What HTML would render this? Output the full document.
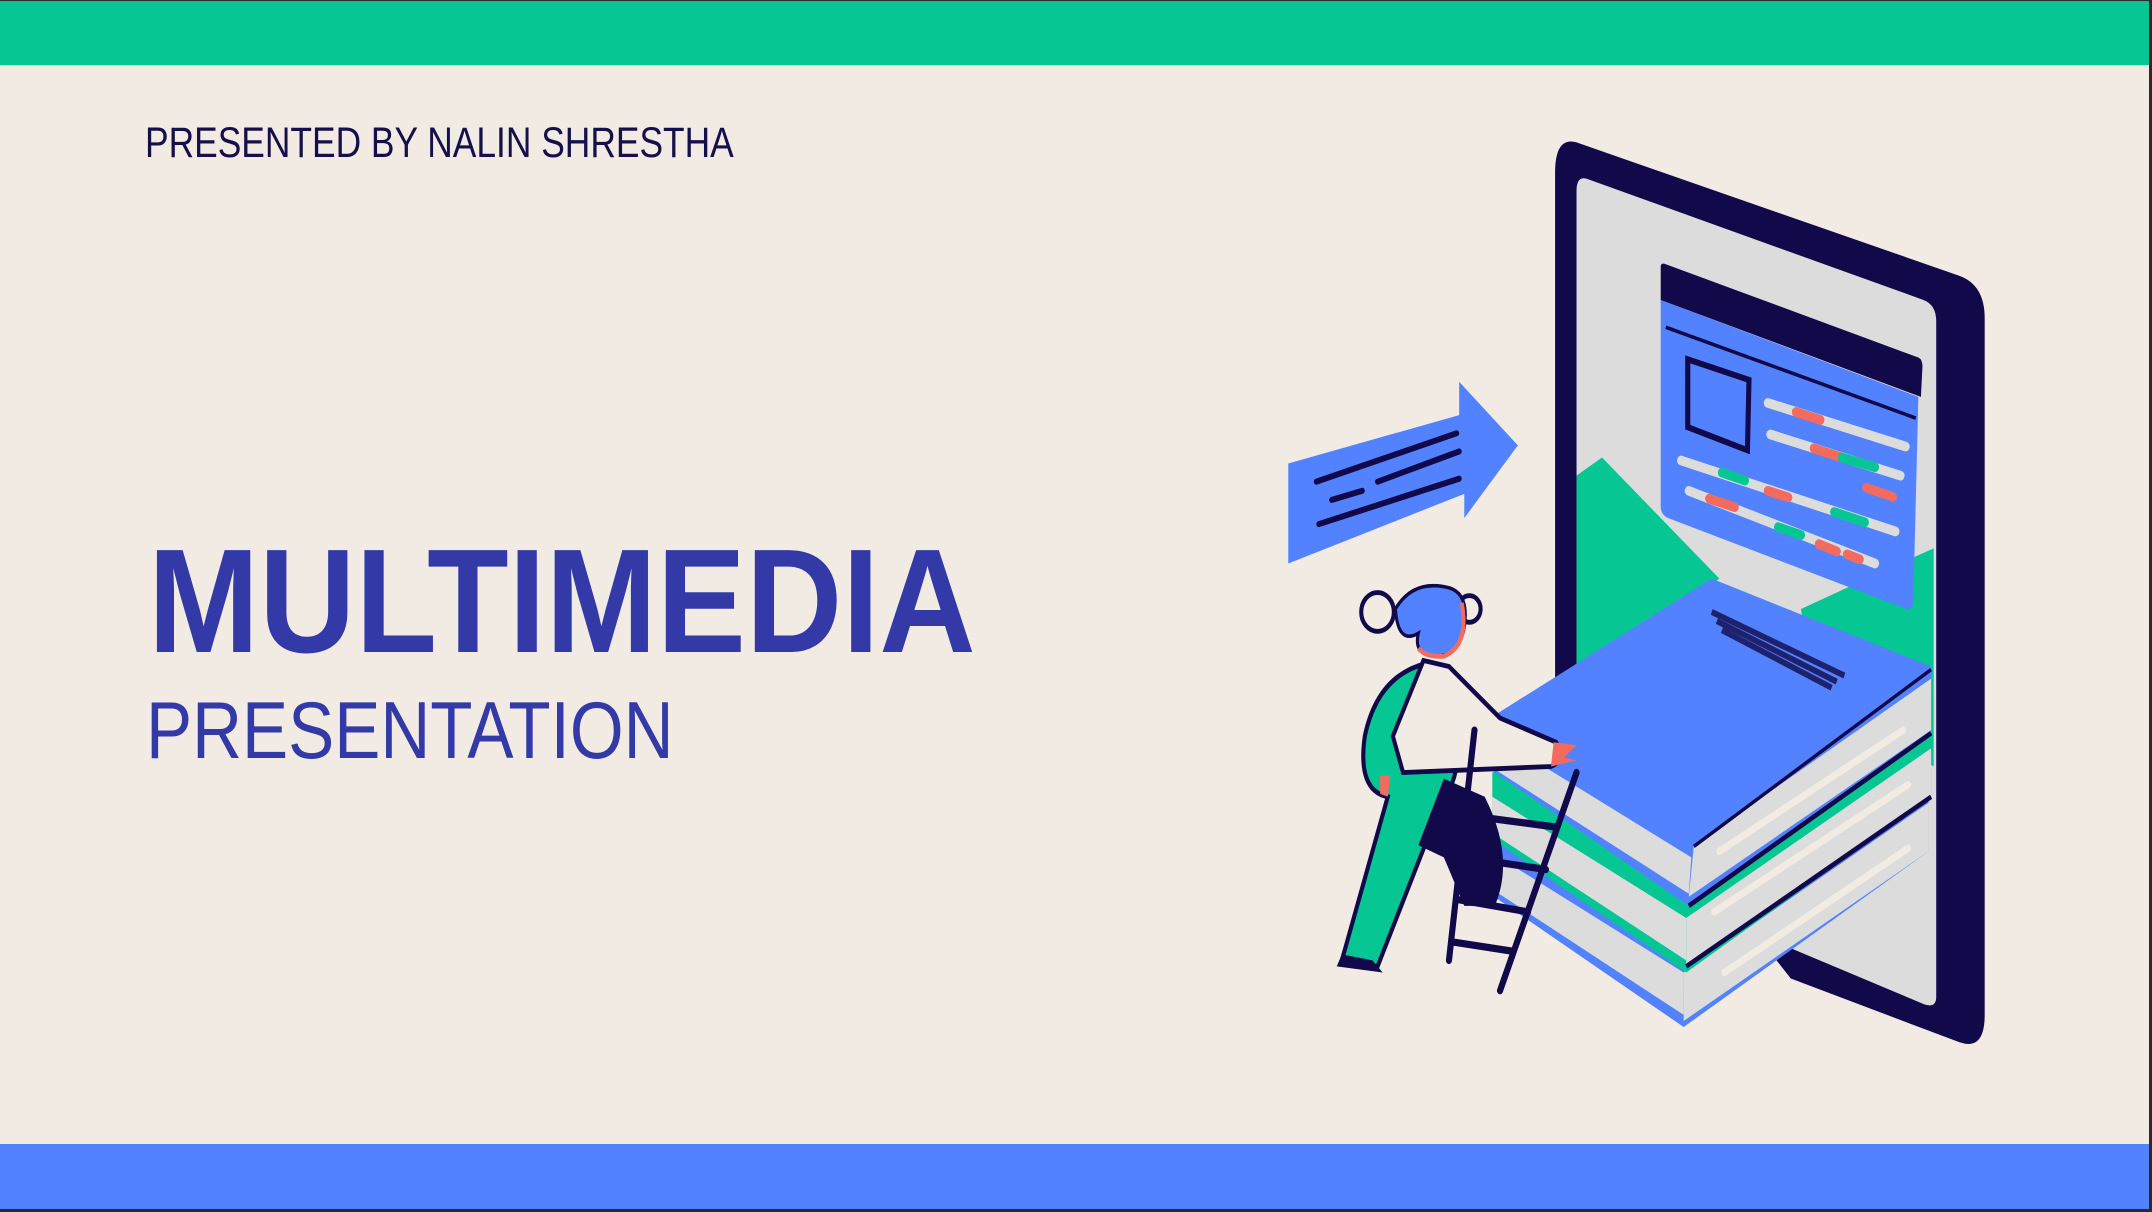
<!DOCTYPE html>
<html><head><meta charset="utf-8"><style>
html,body{margin:0;padding:0;background:#2a2a2a;}
svg{display:block}
</style></head><body>
<svg width="2152" height="1212" viewBox="0 0 2152 1212" xmlns="http://www.w3.org/2000/svg">
<rect x="0" y="0" width="2152" height="1212" fill="#2a2a2a"/>
<rect x="0" y="1" width="2149" height="1208" fill="#F2EBE4"/>
<rect x="0" y="1" width="2149" height="64" fill="#06C793"/>
<rect x="0" y="1144" width="2149" height="65" fill="#5282FF"/>
<g transform="translate(145,157) scale(0.82,1)"><text x="0" y="0" font-family="Liberation Sans, sans-serif" font-size="43" fill="#15104A" textLength="718" lengthAdjust="spacingAndGlyphs">PRESENTED BY NALIN SHRESTHA</text></g>
<g transform="translate(148,652) scale(0.89,1)"><text x="0" y="0" font-family="Liberation Sans, sans-serif" font-weight="bold" font-size="148" fill="#333AA8" textLength="930" lengthAdjust="spacingAndGlyphs">MULTIMEDIA</text></g>
<g transform="translate(146,758) scale(0.84,1)"><text x="0" y="0" font-family="Liberation Sans, sans-serif" font-size="81" fill="#333AA8" textLength="628" lengthAdjust="spacingAndGlyphs">PRESENTATION</text></g>

<g transform="translate(1250,100) scale(0.5102,0.6059)">
  <path d="M640,70 L1390,290 Q1440,305 1440,360 L1440,1510 Q1440,1570 1390,1555 L1060,1450 L640,1000 L598,960 L598,120 Q598,60 640,70 Z" fill="#12094A"/>
  <path d="M660,130 L1320,330 Q1345,338 1345,365 L1345,1480 Q1345,1500 1320,1492 L1060,1400 L640,960 L640,150 Q640,125 660,130 Z" fill="#DCDCDC"/>
  <path d="M640,620 L690,590 L920,790 L640,950 Z" fill="#06C793"/>
  <path d="M1080,840 L1260,770 L1340,740 L1340,1100 L1100,960 Z" fill="#06C793"/>
  <path d="M805,330 L1310,490 L1300,830 Q1298,845 1280,838 L820,690 Q805,685 805,670 Z" fill="#5282FF"/>
  <path d="M805,275 Q805,268 815,271 L1310,425 Q1318,428 1318,440 L1315,490 L805,330 Z" fill="#12094A"/>
  <path d="M815,375 L1305,525" stroke="#12094A" stroke-width="6"/>
  <path d="M858,428 L978,462 L975,578 L858,540 Z" fill="none" stroke="#12094A" stroke-width="10"/>
  <g stroke-linecap="round" stroke-width="16" fill="none">
    <path d="M1015,500 L1285,572" stroke="#DCDCDC"/>
    <path d="M1070,515 L1118,528" stroke="#F26B5E"/>
    <path d="M1020,552 L1275,620" stroke="#DCDCDC"/>
    <path d="M1105,575 L1160,590 M1208,640 L1260,655" stroke="#F26B5E"/>
    <path d="M1160,590 L1225,606" stroke="#06C793"/>
    <path d="M845,595 L1265,712" stroke="#DCDCDC"/>
    <path d="M925,615 L970,628 M1145,680 L1205,697" stroke="#06C793"/>
    <path d="M1015,645 L1055,656" stroke="#F26B5E"/>
    <path d="M860,645 L1225,765" stroke="#DCDCDC"/>
    <path d="M900,658 L950,672 M1115,733 L1150,745 M1170,750 L1195,758" stroke="#F26B5E"/>
    <path d="M1035,705 L1080,718" stroke="#06C793"/>
  </g>
  <path d="M470,1200 L905,980 L1330,1130 L1330,1240 L850,1530 L470,1310 Z" fill="#5282FF"/>
  <path d="M470,1240 L850,1440 L850,1510 L470,1300 Z" fill="#DCDCDC"/>
  <path d="M850,1440 L1330,1160 L1330,1240 L850,1520 Z" fill="#DCDCDC"/>
  <path d="M930,1440 L1290,1235" stroke="#F2EBE4" stroke-width="12" stroke-linecap="round"/>
  <path d="M475,1110 L905,890 L1335,1040 L1335,1150 L855,1440 L475,1220 Z" fill="#06C793"/>
  <path d="M475,1150 L855,1350 L855,1420 L475,1210 Z" fill="#DCDCDC"/>
  <path d="M855,1350 L1335,1070 L1335,1150 L855,1430 Z" fill="#DCDCDC"/>
  <path d="M910,1340 L1290,1130" stroke="#F2EBE4" stroke-width="12" stroke-linecap="round"/>
  <path d="M855,1430 L1335,1150" stroke="#12094A" stroke-width="8"/>
  <path d="M480,1015 L905,790 L1335,935 L1335,1045 L860,1330 L480,1110 Z" fill="#5282FF"/>
  <path d="M480,1050 L865,1250 L860,1310 L480,1105 Z" fill="#DCDCDC"/>
  <path d="M870,1230 L1335,955 L1335,1040 L860,1315 Z" fill="#DCDCDC"/>
  <path d="M920,1240 L1280,1040" stroke="#F2EBE4" stroke-width="12" stroke-linecap="round"/>
  <path d="M870,1232 L1335,940" stroke="#12094A" stroke-width="6"/>
  <path d="M860,1330 L1335,1045" stroke="#12094A" stroke-width="8"/>
  <path d="M905,845 L1165,950 M915,860 L1150,960 M925,875 L1140,970" stroke="#12094A" stroke-width="10" opacity="0.8"/>
  <path d="M75,600 L410,520 L410,465 L525,570 L420,690 L420,650 L75,765 Z" fill="#5282FF"/>
  <g stroke="#12094A" stroke-width="10" stroke-linecap="round">
    <path d="M130,630 L405,550 M160,660 L220,645 M250,630 L410,580 M135,700 L410,625"/>
  </g>
  <path d="M345,930 Q250,950 225,1050 Q210,1140 270,1150 L180,1420 L250,1430 L380,1150 Q420,1110 400,1020 Z" fill="#06C793" stroke="#12094A" stroke-width="8"/>
  <path d="M340,925 L390,935 L490,1020 L600,1060 Q620,1090 590,1100 L300,1110 L280,1050 Z" fill="#F2EBE4" stroke="#12094A" stroke-width="8"/>
  <path d="M380,1120 L460,1150 Q520,1250 480,1330 L420,1330 L380,1250 L330,1230 Z" fill="#12094A"/>
  <path d="M170,1430 L260,1440 L240,1420 L180,1410 Z" fill="#12094A"/>
  <path d="M595,1060 L640,1065 L615,1085 L640,1090 L590,1100 Z" fill="#F26B5E"/>
  <path d="M255,1115 L275,1115 L270,1150 L255,1145 Z" fill="#F26B5E"/>
  <circle cx="250" cy="845" r="32" fill="#F2EBE4" stroke="#12094A" stroke-width="8"/>
  <circle cx="430" cy="840" r="22" fill="#F2EBE4" stroke="#12094A" stroke-width="8"/>
  <path d="M285,840 Q320,790 390,805 Q430,815 420,870 Q410,920 360,918 Q320,915 330,880 Q290,900 285,840 Z" fill="#5282FF" stroke="#12094A" stroke-width="6"/>
  <path d="M415,830 Q430,900 380,918 Q345,920 330,905" fill="none" stroke="#F26B5E" stroke-width="8"/>
  <g stroke="#12094A" stroke-width="12" stroke-linecap="round">
    <path d="M440,1040 L390,1420 M640,1110 L490,1470 M420,1180 L600,1200 M420,1250 L580,1270 M410,1320 L545,1340 M400,1390 L515,1405"/>
  </g>
</g>
</svg>
</body></html>
